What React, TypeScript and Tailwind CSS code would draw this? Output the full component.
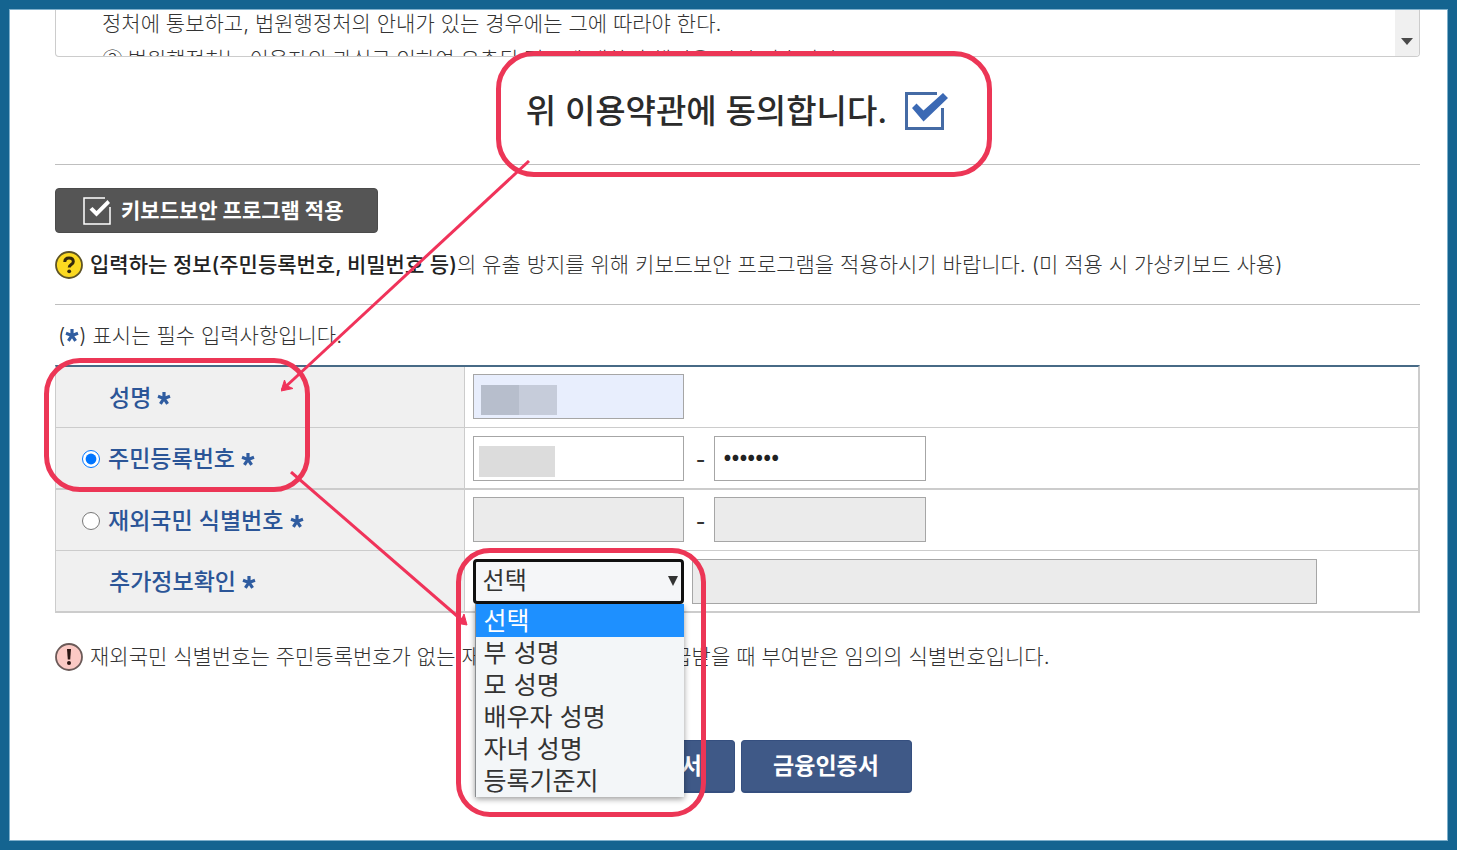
import React, { useState } from "react";

const options = ["선택", "부 성명", "모 성명", "배우자 성명", "자녀 성명", "등록기준지"];

function Star() {
  return (
    <svg viewBox="0 0 14 14" className="-mt-1 inline-block h-[14px] w-[14px]" aria-label="필수">
      <g stroke="#2f5ca0" strokeWidth="3.2" strokeLinecap="butt">
        <path d="M7 7.4V1M7 7.4L1 5.2M7 7.4L13 5.2M7 7.4L3.4 12.8M7 7.4L10.6 12.8" />
      </g>
    </svg>
  );
}

function Ring({ className }: { className: string }) {
  return <div className={`pointer-events-none absolute z-30 border-[5px] border-[#ec3656] ${className}`} />;
}

function Divider() {
  return <hr className="border-0 border-t border-[#bfbfbf]" />;
}

const field = "h-[45px] border border-[#a6a6a6] px-[9px] text-[#222] outline-none";
const rowHead =
  "border-r border-[#ccc] bg-[#f0f0f0] text-left text-[23px] font-medium leading-8 text-[#2b5597]";

export default function App() {
  const [kind, setKind] = useState("resident");
  const [agreed, setAgreed] = useState(true);

  return (
    <div
      className="relative min-h-screen overflow-hidden border-[9px] border-[#146490] bg-white text-[21px] font-light leading-8 text-[#333]"
      style={{ fontFamily: 'Inter, "Noto Sans CJK KR", sans-serif' }}
    >
      <main className="min-h-[832px] border border-[#7fb0cb] px-[45px] pr-[27px]">
        <section className="flex h-[47px] overflow-hidden rounded-b border border-t-0 border-[#ccc]">
          <div className="flex-1 pl-[46px] leading-9 whitespace-nowrap">
            <p className="-mt-1">정처에 통보하고, 법원행정처의 안내가 있는 경우에는 그에 따라야 한다.</p>
            <p>
              <span className="font-['Noto_Sans_CJK_KR'] leading-none">③ </span>
              법원행정처는 이용자의 과실로 인하여 유출된 정보에 대하여 책임을 지지 않습니다.
            </p>
          </div>
          <div className="flex w-6 items-end justify-center bg-[#f0f0f0] pb-[11px]">
            <svg viewBox="0 0 12 7" className="h-[7px] w-3">
              <path d="M0 0H12L6 7Z" fill="#4a4a4a" />
            </svg>
          </div>
        </section>

        <label className="relative flex h-[107px] items-center justify-center gap-[18px]">
          <span className="text-[33px] font-medium text-[#2b2b2b]">위 이용약관에 동의합니다.</span>
          <input
            type="checkbox"
            className="peer sr-only"
            checked={agreed}
            onChange={(e) => setAgreed(e.target.checked)}
          />
          <svg viewBox="0 0 44 38" className="h-[38px] w-11">
            <path d="M32 1.5H1.5V36.5H37.5V16" fill="none" stroke="#456ba5" strokeWidth="3" />
            {agreed && <path d="M7 16L11.5 11.5L18.5 18.5L38 1L43 6L18.5 29.5Z" fill="#3b69b4" />}
          </svg>
        </label>
        <Divider />

        <button
          type="button"
          className="mt-[23px] flex h-[45px] items-center gap-[10px] rounded border border-[#4b4b4b] bg-[#555] pr-[34px] pl-[27px] font-bold text-white"
        >
          <svg viewBox="0 0 28 28" className="h-7 w-7">
            <path d="M22 1H1V27H27V10" fill="none" stroke="#fff" strokeWidth="1.5" />
            <path d="M6.5 12.5L9.5 10L13.5 14L24.5 3L27 6L13.5 19.5Z" fill="#fff" />
          </svg>
          <span>키보드보안 프로그램 적용</span>
        </button>

        <p className="mt-4 flex items-center gap-[7px]">
          <svg viewBox="0 0 28 28" className="h-7 w-7 shrink-0">
            <circle cx="14" cy="14" r="13" fill="#fbd921" stroke="#5d5326" strokeWidth="1.8" />
            <path
              d="M9.8 11C9.8 8.4 11.6 7 14 7C16.5 7 18.3 8.4 18.3 10.7C18.3 13.6 14.2 13.5 14.2 16.5"
              fill="none"
              stroke="#33280c"
              strokeWidth="3"
            />
            <circle cx="14.2" cy="20.3" r="1.9" fill="#33280c" />
          </svg>
          <span>
            <b className="font-medium text-[#222]">입력하는 정보(주민등록번호, 비밀번호 등)</b>의 유출 방지를 위해 키보드보안
            프로그램을 적용하시기 바랍니다. (미 적용 시 가상키보드 사용)
          </span>
        </p>
        <div className="mt-[23px]">
          <Divider />
        </div>

        <p className="mt-[15px] pl-[3px]">
          (<Star />) 표시는 필수 입력사항입니다.
        </p>

        <table className="mt-[13px] w-full table-fixed border-separate border-spacing-0 border-t-2 border-r-2 border-l border-t-[#476a86] border-r-[#ccc] border-l-[#ccc]">
          <colgroup>
            <col className="w-[30%]" />
            <col />
          </colgroup>
          <tbody>
            <tr className="h-[61px]">
              <th scope="row" className={`${rowHead} border-b pt-[2px] pl-[53px]`}>
                <label htmlFor="name">성명</label> <Star />
              </th>
              <td className="border-b border-[#ccc] px-2 pb-px">
                <div className="relative flex">
                  <input id="name" className={`${field} w-[211px] bg-[#e8eefd] text-[22px]`} />
                  <span className="absolute top-[11px] left-2 h-[30px] w-[38px] bg-[#b7becc]" />
                  <span className="absolute top-[11px] left-[46px] h-[30px] w-[38px] bg-[#c6ccda]" />
                </div>
              </td>
            </tr>
            <tr className="h-[62px]">
              <th scope="row" className={`${rowHead} border-b-2 pt-[2px] pl-[26px]`}>
                <label className="inline-flex items-center gap-2">
                  <input
                    type="radio"
                    name="kind"
                    className="h-[18px] w-[18px]"
                    checked={kind === "resident"}
                    onChange={() => setKind("resident")}
                  />
                  주민등록번호
                </label>{" "}
                <Star />
              </th>
              <td className="border-b-2 border-[#ccc] px-2">
                <div className="relative flex items-center">
                  <input aria-label="주민등록번호 앞자리" className={`${field} w-[211px] text-[22px]`} />
                  <span className="w-[30px] pt-1 pl-1 text-center font-medium">-</span>
                  <input
                    type="password"
                    aria-label="주민등록번호 뒷자리"
                    defaultValue="0000000"
                    className={`${field} w-[212px] pb-2 font-['Noto_Sans_CJK_KR'] text-[25px]`}
                  />
                  <span className="absolute top-[10px] left-[6px] h-[31px] w-[76px] bg-[#dcdcdc]" />
                </div>
              </td>
            </tr>
            <tr className="h-[61px]">
              <th scope="row" className={`${rowHead} border-b pt-[2px] pl-[26px]`}>
                <label className="inline-flex items-center gap-2">
                  <input
                    type="radio"
                    name="kind"
                    className="h-[18px] w-[18px]"
                    checked={kind === "overseas"}
                    onChange={() => setKind("overseas")}
                  />
                  재외국민 식별번호
                </label>{" "}
                <Star />
              </th>
              <td className="border-b border-[#ccc] px-2 pb-px">
                <div className="flex items-center">
                  <input
                    disabled
                    aria-label="식별번호 앞자리"
                    className={`${field} w-[211px] bg-[#ebebeb] text-[22px]`}
                  />
                  <span className="w-[30px] pt-1 pl-1 text-center font-medium">-</span>
                  <input
                    disabled
                    aria-label="식별번호 뒷자리"
                    className={`${field} w-[212px] bg-[#ebebeb] text-[22px]`}
                  />
                </div>
              </td>
            </tr>
            <tr className="h-[62px]">
              <th scope="row" className={`${rowHead} border-b-2 pt-[2px] pl-[53px]`}>
                <label htmlFor="extra">추가정보확인</label> <Star />
              </th>
              <td className="border-b-2 border-[#ccc] px-2">
                <div className="relative flex gap-2">
                  <select
                    id="extra"
                    className="h-[45px] w-[211px] appearance-none rounded border-[3px] border-[#111] bg-[#f5f6f8] px-[7px] text-[24px] leading-8 font-normal text-[#333] outline-none"
                  >
                    {options.map((o) => (
                      <option key={o}>{o}</option>
                    ))}
                  </select>
                  <svg viewBox="0 0 10 10" className="pointer-events-none absolute top-[17px] left-[195px] h-[10px] w-[10px]">
                    <path d="M0 0H10L5 10Z" fill="#333" />
                  </svg>
                  <input
                    disabled
                    aria-label="추가정보"
                    className={`${field} w-[625px] bg-[#ebebeb] text-[22px]`}
                  />
                  <ul
                    role="listbox"
                    aria-label="추가정보 선택"
                    className="absolute top-[45px] left-[2px] z-20 w-[209px] border-l border-[#8a8d90] bg-[#f3f6f8] text-[25px] leading-8 font-normal text-[#333] shadow-[0_2px_6px_rgba(0,0,0,0.4)]"
                  >
                    {options.map((o, i) => (
                      <li
                        key={o}
                        role="option"
                        aria-selected={i === 0}
                        className={i === 0 ? "bg-[#1e90ff] pt-px pl-2 text-white" : "pl-2"}
                      >
                        {o}
                      </li>
                    ))}
                  </ul>
                </div>
              </td>
            </tr>
          </tbody>
        </table>

        <p className="mt-7 flex items-center gap-[7px]">
          <svg viewBox="0 0 28 28" className="h-7 w-7 shrink-0">
            <circle cx="14" cy="14" r="13" fill="#fbc9c4" stroke="#6b5a58" strokeWidth="1.8" />
            <path d="M12 6H16L15.2 16.5H12.8Z" fill="#2a1512" />
            <circle cx="14" cy="20" r="2" fill="#2a1512" />
          </svg>
          <span>재외국민 식별번호는 주민등록번호가 없는 재외국민이 여권 등을 발급받을 때 부여받은 임의의 식별번호입니다.</span>
        </p>

        <div className="mt-[67px] flex justify-center gap-[6px]">
          {["공동인증서", "금융인증서"].map((t) => (
            <button
              key={t}
              type="button"
              className="h-[53px] w-[171px] rounded border border-b-2 border-[#354f7f] bg-[#3f5987] text-[23px] font-bold text-white"
            >
              {t}
            </button>
          ))}
        </div>
      </main>

      <Ring className="top-[42px] left-[487px] h-[126px] w-[496px] rounded-[38px]" />
      <Ring className="top-[349px] left-[35px] h-[134px] w-[266px] rounded-[36px]" />
      <Ring className="top-[539px] left-[447px] h-[269px] w-[250px] rounded-[34px]" />
      <svg viewBox="0 0 250 232" className="pointer-events-none absolute top-[151px] left-[272px] z-30 h-[232px] w-[250px]">
        <path d="M248 1L1 230" stroke="#f0335a" strokeWidth="3" />
        <path d="M0 231L3.5 220L5.5 225.5L12 228.5Z" fill="#f0335a" stroke="#f0335a" />
      </svg>
      <svg viewBox="0 0 178 155" className="pointer-events-none absolute top-[462px] left-[281px] z-30 h-[155px] w-[178px]">
        <path d="M1 1L174 151" stroke="#f0335a" strokeWidth="3" />
        <path d="M177 154L174 143L171.5 148.5L166 152Z" fill="#f0335a" stroke="#f0335a" />
      </svg>
    </div>
  );
}
